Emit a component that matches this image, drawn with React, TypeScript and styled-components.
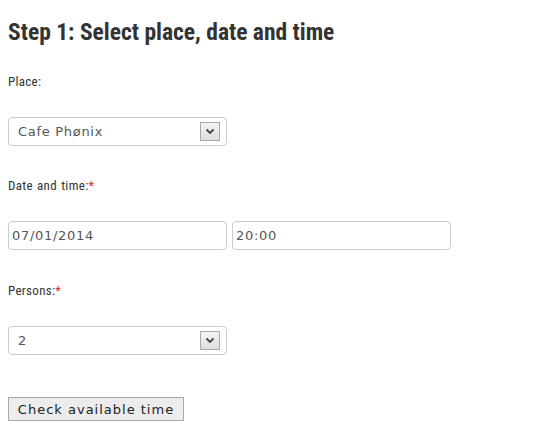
import React from "react";
import styled, { createGlobalStyle } from "styled-components";

const GlobalStyle = createGlobalStyle`
  html, body {
    margin: 0;
    padding: 0;
    background: #ffffff;
  }
  body {
    font-family: "Roboto Condensed", "Roboto", sans-serif;
    color: #333333;
  }
`;

const Page = styled.div`
  padding: 0 8px;
  width: 549px;
  box-sizing: border-box;
`;

const Heading = styled.h2`
  margin: 0;
  padding-top: 18px;
  font-family: "Roboto Condensed", "Roboto", sans-serif;
  font-weight: 700;
  font-size: 23.5px;
  line-height: 28px;
  color: #333333;
  white-space: nowrap;
`;

const Field = styled.div<{ $top: number }>`
  display: flex;
  flex-direction: column;
  margin-top: ${(p) => p.$top}px;
`;

const Label = styled.label`
  font-family: "Roboto Condensed", "Roboto", sans-serif;
  font-size: 13px;
  line-height: 16px;
  word-spacing: 1px;
  letter-spacing: 0.3px;
  color: #333333;
  margin-bottom: 27px;
`;

const Star = styled.span`
  color: #e8281e;
`;

const Row = styled.div`
  display: flex;
  gap: 5px;
`;

const Box = styled.div<{ $pad?: number }>`
  position: relative;
  width: 219px;
  height: 29px;
  box-sizing: border-box;
  border: 1px solid #cccccc;
  border-radius: 4px;
  background: #ffffff;
  display: flex;
  align-items: center;
  padding-left: ${(p) => p.$pad ?? 9}px;
  font-family: "DejaVu Sans", "Noto Sans", sans-serif;
  font-size: 13px;
  letter-spacing: 0.7px;
  color: #555555;
`;

const Arrow = styled.span`
  position: absolute;
  right: 6px;
  top: 4px;
  width: 20px;
  height: 19px;
  box-sizing: border-box;
  border: 1px solid #a9a9a9;
  background: linear-gradient(#f4f4f4, #dedede);
  display: flex;
  align-items: center;
  justify-content: center;
`;

const Button = styled.button`
  margin-top: 42px;
  height: 24px;
  width: 176px;
  box-sizing: border-box;
  border: 1px solid #a9a9a9;
  border-radius: 0;
  background: #ececec;
  font-family: "DejaVu Sans", "Noto Sans", sans-serif;
  font-size: 13px;
  letter-spacing: 1px;
  color: #222222;
  padding: 0;
  cursor: pointer;
`;

const Chevron = () => (
  <svg width="10" height="7" viewBox="0 0 10 7">
    <path d="M1.5 1.5 L5 5 L8.5 1.5" fill="none" stroke="#444" strokeWidth="1.8" />
  </svg>
);

const Select = ({ value, pad }: { value: string; pad?: number }) => (
  <Box $pad={pad}>
    {value}
    <Arrow>
      <Chevron />
    </Arrow>
  </Box>
);

export default function App() {
  return (
    <Page>
      <GlobalStyle />
      <Heading>Step 1: Select place, date and time</Heading>
      <Field $top={28}>
        <Label>Place:</Label>
        <Select value="Cafe Phønix" />
      </Field>
      <Field $top={32}>
        <Label>
          Date and time:<Star>*</Star>
        </Label>
        <Row>
          <Box $pad={3}>07/01/2014</Box>
          <Box $pad={3}>20:00</Box>
        </Row>
      </Field>
      <Field $top={33}>
        <Label>
          Persons:<Star>*</Star>
        </Label>
        <Select value="2" />
      </Field>
      <Button>Check available time</Button>
    </Page>
  );
}
